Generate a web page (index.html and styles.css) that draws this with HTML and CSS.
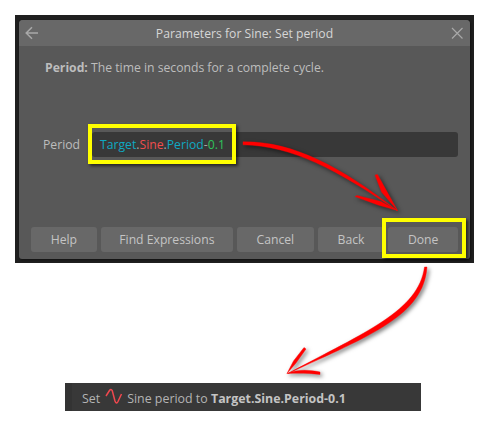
FILE: index.html
```html
<!DOCTYPE html>
<html lang="en">
<head>
  <meta charset="UTF-8">
  <title>Parameters for Sine: Set period</title>
  <link rel="stylesheet" href="styles.css">
</head>
<body>
  <div class="frame">
    <div class="dialog">
      <div class="title-bar">
        <svg class="title-icon" width="14" height="14" viewBox="0 0 14 14">
          <path d="M13 7H1.5M7 1.2L1.2 7L7 12.8" fill="none" stroke="#a8a8a8" stroke-width="1.5"/>
        </svg>
        <span class="title-text">Parameters for Sine: Set period</span>
        <svg class="title-icon" width="14" height="14" viewBox="0 0 14 14">
          <path d="M2 2L12.5 12.5M12.5 2L2 12.5" fill="none" stroke="#a8a8a8" stroke-width="1.2"/>
        </svg>
      </div>
      <p class="description"><b>Period:</b> The time in seconds for a complete cycle.</p>
      <div class="field">
        <label class="field-label">Period</label>
        <div class="field-input">
          <span class="tok-ref">Target</span><span class="tok-op">.</span><span class="tok-name">Sine</span><span class="tok-op">.</span><span class="tok-ref">Period</span><span class="tok-op">-</span><span class="tok-num">0.1</span>
        </div>
      </div>
      <div class="buttons">
        <button class="btn btn-help">Help</button>
        <button class="btn btn-find">Find Expressions</button>
        <button class="btn btn-cancel">Cancel</button>
        <button class="btn btn-back">Back</button>
        <button class="btn btn-done">Done</button>
      </div>
    </div>
  </div>

  <div class="status-bar">
    <span>Set</span>
    <svg class="sine-icon" width="18" height="17" viewBox="0 0 18 17">
      <path d="M1 8L4.5 2.5C5.5 1 6.5 1 7.2 2.5L10 13C10.8 15.5 12 15.5 13 13.5L16.5 6" fill="none" stroke="#f0484e" stroke-width="1.5"/>
    </svg>
    <span>Sine period to <b>Target.Sine.Period-0.1</b></span>
  </div>

  <!-- annotations drawn over the screenshot -->
  <div class="mark mark-input"></div>
  <div class="mark mark-done"></div>
  <svg class="arrows" width="489" height="426" viewBox="0 0 489 426">
    <g fill="#f00" stroke="#f00" stroke-width="0.4" stroke-linejoin="round">
      <path d="M243 141.8C292 141 340 166 397 210.5C338 170.5 292 145.5 243 144.8Z"/>
      <path d="M375 175L377.5 174.5L397.5 210.5L381.5 192Z"/>
      <path d="M355 196.5L357 195.5L381 201.5L397.5 210.5L378 205Z"/>
      <path d="M424.5 267L427 267C423.5 315 372 335 288 373.5C366 331.5 418.5 311 424.5 267Z"/>
      <path d="M304 347.5L306 349L296 363L287 373.5L293.5 361Z"/>
      <path d="M287 373.5C298 369 310 370 320 372L320 374.5C308 373 298 373 287 373.5Z"/>
    </g>
  </svg>
</body>
</html>
```

FILE: styles.css
```css
body {
  margin: 0;
  background: #fff;
  font-family: "Open Sans", sans-serif;
  font-size: 12.2px;
  color: #bdbdbd;
}

.frame {
  width: 459px;
  height: 248px;
  margin: 15px 0 0 15px;
  padding: 5px 4px 4px;
  box-sizing: border-box;
  background: #1f1f1f;
}

.dialog {
  display: flex;
  flex-direction: column;
  height: 100%;
  background: #585858;
  border-radius: 4px 4px 3px 3px;
  box-shadow: 1px 1px 2px #111;
}

.title-bar {
  display: flex;
  align-items: center;
  justify-content: space-between;
  height: 26px;
  padding: 0 6px;
  background: #686868;
  border-radius: 4px 4px 0 0;
}

.title-text {
  color: #d6d6d6;
}

.title-icon {
  flex: none;
}

.description {
  margin: 13px 0 0 26px;
  line-height: 17px;
}

.description b {
  font-weight: 700;
}

.field {
  display: flex;
  align-items: center;
  margin-top: 56px;
  padding: 0 12px 0 24px;
}

.field-label {
  width: 49px;
}

.field-input {
  flex: 1;
  height: 25px;
  line-height: 25px;
  padding-left: 8px;
  background: #383838;
  border-radius: 3px;
}

.tok-ref { color: #0fa9c2; }
.tok-name { color: #f04e4e; }
.tok-op { color: #a8a8a8; }
.tok-num { color: #2fc25b; }

.buttons {
  display: flex;
  gap: 4px;
  margin-top: 70px;
  padding: 0 12px;
}

.btn {
  height: 25px;
  padding: 0;
  border: none;
  border-radius: 3px;
  background: #686868;
  color: #c4c4c4;
  font: inherit;
}

.btn-help { width: 66px; }
.btn-find { width: 133px; }
.btn-cancel { width: 77px; }
.btn-back { width: 67px; }
.btn-done { width: 70px; }

.status-bar {
  display: flex;
  align-items: center;
  gap: 5px;
  width: 356px;
  height: 28px;
  margin: 120px 0 0 65px;
  padding: 3px 0 0 17px;
  box-sizing: border-box;
  background: linear-gradient(to right, #333 7px, #383838 7px);
  color: #b4b4b4;
  font-size: 12.4px;
}

.status-bar b {
  color: #c4c4c4;
}

.sine-icon {
  flex: none;
  margin: -4px -1px 0 0;
}

.mark {
  position: absolute;
  box-sizing: border-box;
  border: 4px solid #ff0;
  box-shadow: 2px 2px 3px rgba(0, 0, 0, 0.6);
}

.mark-input {
  left: 88px;
  top: 124px;
  width: 148px;
  height: 40px;
}

.mark-done {
  left: 382px;
  top: 218px;
  width: 84px;
  height: 40px;
}

.arrows {
  position: absolute;
  left: 0;
  top: 0;
  filter: drop-shadow(2px 2px 2px rgba(0, 0, 0, 0.55));
}
```
